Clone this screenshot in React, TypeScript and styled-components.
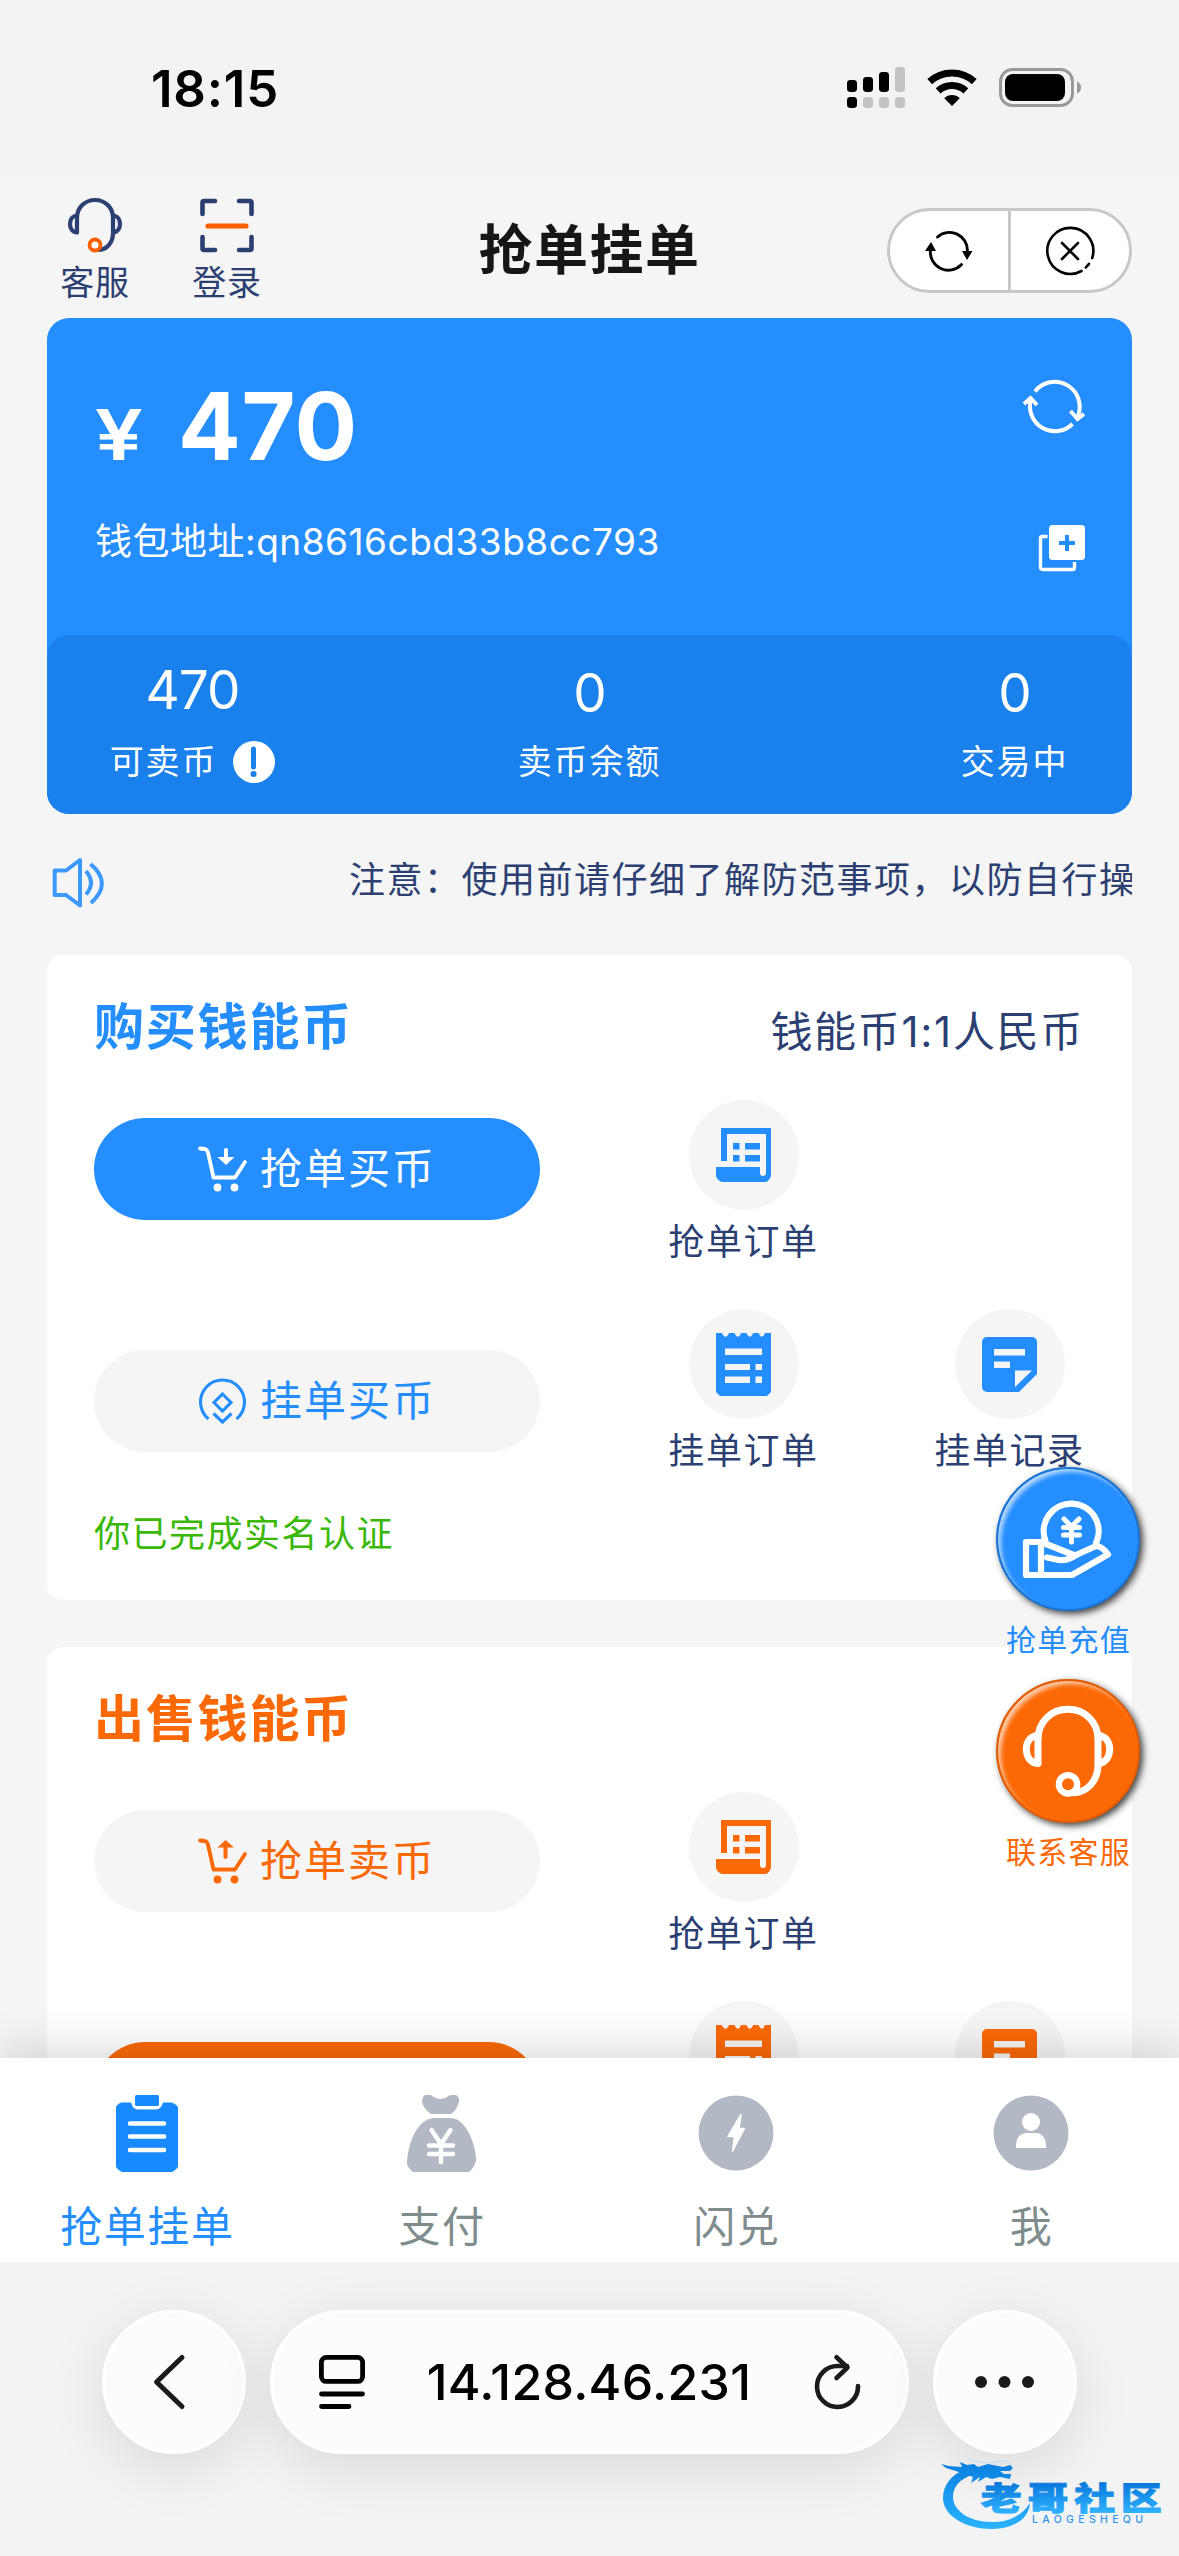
import React from "react";
import styled, { createGlobalStyle } from "styled-components";

const BLUE = "#258eff";
const ORANGE = "#fb6907";
const NAVY = "#2c3f72";
const MIST = "#f5f5f5";

const GlobalStyle = createGlobalStyle`
  * { box-sizing: border-box; }
  body {
    margin: 0;
    background: ${MIST};
    font-family: Inter, "Noto Sans CJK SC", sans-serif;
    color: ${NAVY};
  }
  svg { display: block; flex: none; overflow: visible; }
  button {
    border: 0;
    padding: 0;
    background: none;
    font: inherit;
    color: inherit;
  }
`;

const Screen = styled.div`
  width: 1179px;
  height: 2556px;
  display: flex;
  flex-direction: column;
  overflow: hidden;
  position: relative;
`;

/* ---------- status bar ---------- */

const StatusBar = styled.div`
  flex: none;
  height: 177px;
  padding: 67px 98px 0 151px;
  display: flex;
  justify-content: space-between;
  align-items: flex-start;
  background: #f3f3f3;
`;

const Clock = styled.time`
  padding-top: 1px;
  font-size: 51px;
  line-height: 42px;
  font-weight: 600;
  letter-spacing: 0.8px;
  color: #000;
`;

const StatusIcons = styled.div`
  display: flex;
  align-items: center;
  gap: 22px;
`;

const SignalIcon = () => (
  <svg width="58" height="41" viewBox="0 0 58 41">
    <rect x="0" y="13" width="10" height="12" rx="3.4" />
    <rect x="16" y="10" width="10" height="15" rx="3.4" />
    <rect x="32" y="5" width="10" height="20" rx="3.4" />
    <rect x="48" y="0" width="10" height="25" rx="3.4" fill="#c3c3c3" />
    <rect x="0" y="30" width="10" height="11" rx="3.4" />
    {[16, 32, 48].map((x) => (
      <rect key={x} x={x} y="30" width="10" height="11" rx="3.4" fill="#c3c3c3" />
    ))}
  </svg>
);

const WifiIcon = () => (
  <svg width="50" height="37" viewBox="0 0 50 37" fill="none" stroke="#000" strokeWidth="7">
    <path d="M2.700 12.700A33 33 0 0 1 47.300 12.700" />
    <path d="M11.100 21.900A20.500 20.500 0 0 1 38.900 21.900" />
    <path d="M25 37L17.300 29.200A11 11 0 0 1 32.700 29.200Z" fill="#000" stroke="none" />
  </svg>
);

const BatteryIcon = () => (
  <svg width="82" height="39" viewBox="0 0 82 39">
    <rect x="1.500" y="1.500" width="72" height="36" rx="12" fill="none" stroke="#999" strokeWidth="3" />
    <rect x="6" y="6" width="60" height="27" rx="8" />
    <path d="M78 13.500Q82 15 82 19.500T78 25.500Z" fill="#999" />
  </svg>
);

/* ---------- scrolling page ---------- */

const Page = styled.main`
  flex: none;
  height: 1881px;
  overflow: hidden;
  background: ${MIST};
`;

const Header = styled.header`
  height: 141px;
  padding: 0 47px;
  display: grid;
  grid-template-columns: 1fr auto 1fr;
`;

const HeaderLinks = styled.div`
  display: flex;
  gap: 36px;
  padding-top: 21px;
`;

const HeaderLink = styled.button`
  width: 96px;
  height: 110px;
  display: flex;
  flex-direction: column;
  align-items: center;
  gap: 11px;
  font-size: 34px;
  line-height: 40px;
  letter-spacing: 0.8px;
`;

const Title = styled.h1`
  margin: 44px 0 0;
  font-size: 54px;
  line-height: 60px;
  font-weight: 700;
  letter-spacing: 1.500px;
  color: #161616;
`;

const Capsule = styled.div`
  justify-self: end;
  margin-top: 31px;
  width: 245px;
  height: 85px;
  display: flex;
  border: 3px solid #c8c8c8;
  border-radius: 43px;
  background: #fff;
`;

const CapsuleButton = styled.button<{ $divided?: boolean }>`
  flex: 1;
  display: flex;
  align-items: center;
  justify-content: center;
  ${(p) => p.$divided && "border-right: 3px solid #c8c8c8; flex: none; width: 121px;"}
`;

type HeadsetProps = { size: number; color: string; mic: string; micFill: string };
const HeadsetIcon = ({ size, color, mic, micFill }: HeadsetProps) => (
  <svg width={size} height={size} viewBox="0 0 54 54" fill="none" stroke={color} strokeWidth="4.200" strokeLinecap="round" strokeLinejoin="round">
    <path d="M9 34V20C9 9.500 17 2 27 2S45 9.500 45 20V35C45 44.500 39 51.500 31 52" />
    <path d="M9 17.500C4 18 2 22 2 26S4 34 9 34.500" />
    <path d="M45 17.500C50 18 52 22 52 26S50 34 45 34.500" />
    <circle cx="27" cy="47" r="5.500" fill={micFill} stroke={mic} strokeWidth="3.800" />
  </svg>
);

const ScanIcon = () => (
  <svg width="54" height="54" viewBox="0 0 54 54" fill="none" stroke={NAVY} strokeWidth="4.600" strokeLinecap="round" strokeLinejoin="round">
    <path d="M2.500 16V4.500Q2.500 3 4 3H15M39 3H50Q51.500 3 51.500 4.500V16M51.500 39V50.500Q51.500 52 50 52H39M15 52H4Q2.500 52 2.500 50.500V39" />
    <path d="M8 28H46" stroke="#fb5f00" strokeWidth="5.200" />
  </svg>
);

const CycleIcon = () => (
  <svg width="48" height="38" viewBox="0 0 48 38" fill="none" stroke="#000" strokeWidth="2.900" strokeLinecap="round">
    <path d="M12.500 5A18 18 0 0 1 42.500 19" />
    <path d="M36.500 32.500A18 18 0 0 1 5.500 18" />
    <path d="M37 19H47.500L42 28Z" fill="#000" stroke="none" />
    <path d="M0 19H11L6 10Z" fill="#000" stroke="none" />
  </svg>
);

const CloseIcon = () => (
  <svg width="48" height="48" viewBox="0 0 48 48" fill="none" stroke="#000" strokeWidth="2.600" strokeLinecap="round">
    <path d="M46.200 31A23 23 0 1 0 35.500 44" />
    <path d="M39.800 40.500L43 36.800" />
    <path d="M16 16L32 32M32 16L16 32" />
  </svg>
);

/* ---------- wallet card ---------- */

const Wallet = styled.section`
  margin: 0 47px;
  height: 496px;
  display: flex;
  flex-direction: column;
  justify-content: space-between;
  border-radius: 22px;
  background: ${BLUE};
  color: #fff;
`;

const WalletTop = styled.div`
  padding: 64px 47px 0 48px;
`;

const WalletRow = styled.div`
  display: flex;
  align-items: flex-start;
  justify-content: space-between;
`;

const Balance = styled.div`
  height: 137px;
  display: flex;
  align-items: baseline;
  font-size: 93px;
  line-height: 88px;
  font-weight: 700;
  letter-spacing: 0.500px;
`;

const Currency = styled.span`
  width: 83px;
  font-size: 70px;
  font-weight: 600;
  letter-spacing: 0;
  transform: scaleX(1.22);
  transform-origin: 1px 50%;
`;

const Address = styled.div`
  font-size: 37px;
  line-height: 46px;
  letter-spacing: 0.500px;
`;

const CopyButton = styled.button`
  padding-top: 6px;
`;

const Stats = styled.div`
  height: 179px;
  padding: 27px 0 0;
  display: grid;
  grid-template-columns: 291px 503px 291px;
  border-radius: 22px;
  background: #1a80ec;
`;

const Stat = styled.div<{ $drop?: boolean; $end?: boolean }>`
  width: ${(p) => (p.$end ? "235px" : "auto")};
  justify-self: ${(p) => (p.$end ? "end" : "stretch")};
  padding-top: ${(p) => (p.$drop ? 4 : 1)}px;
  display: flex;
  flex-direction: column;
  align-items: center;
  gap: ${(p) => (p.$drop ? 20 : 23)}px;
`;

const StatValue = styled.div`
  font-size: 53px;
  line-height: 54px;
  font-weight: 400;
  letter-spacing: -1px;
`;

const StatLabel = styled.div`
  display: flex;
  align-items: center;
  gap: 16px;
  font-size: 34px;
  line-height: 44px;
  letter-spacing: 1.900px;
`;

const RefreshIcon = () => (
  <svg width="62" height="54" viewBox="0 0 62 54" fill="none" stroke="#fff" strokeWidth="4">
    <path d="M12 9.500A25 25 0 0 1 55 34" />
    <path d="M49.500 42A25 25 0 0 1 8 17" />
    <path d="M47.500 29L54.500 37L61 32" />
    <path d="M1 22L7.500 16L14 23" />
  </svg>
);

const CopyIcon = () => (
  <svg width="46" height="46" viewBox="0 0 46 46">
    <rect x="1.500" y="11.500" width="34" height="33" rx="2" fill="none" stroke="#fff" strokeWidth="3.400" />
    <rect x="8.500" y="-1" width="38.500" height="38" rx="3" fill={BLUE} />
    <rect x="10" y="0" width="36" height="35" rx="3.500" fill="#fff" />
    <path d="M28 10V26M20 18H36" stroke={BLUE} strokeWidth="4" />
  </svg>
);

const AlertIcon = () => (
  <svg width="42" height="42" viewBox="0 0 42 42">
    <circle cx="21" cy="21" r="21" fill="#fff" />
    <path d="M20.500 8V26" stroke="#1a80ec" strokeWidth="5" strokeLinecap="round" />
    <circle cx="20.500" cy="33" r="3" fill="#1a80ec" />
  </svg>
);

/* ---------- notice ---------- */

const Notice = styled.div`
  height: 141px;
  margin: 0 47px;
  padding: 44px 0 0 6px;
  display: flex;
  align-items: flex-start;
`;

const NoticeWindow = styled.div`
  flex: 1;
  margin-left: 57px;
  padding-left: 188px;
  overflow: hidden;
  white-space: nowrap;
  font-size: 36px;
  line-height: 44px;
  letter-spacing: 1.500px;
`;

const SpeakerIcon = () => (
  <svg width="51" height="50" viewBox="0 0 51 50" fill="none" stroke="#3c99ff" strokeWidth="4" strokeLinejoin="round">
    <path d="M1.700 12.500H13L27 2V47.500L13 37H1.700Z" />
    <path d="M33 13Q43 25 33 36.500" />
    <path d="M37.500 6Q60 25 38 45" />
  </svg>
);

/* ---------- trade cards ---------- */

const TradeCard = styled.section`
  height: 645px;
  margin: 0 47px 47px;
  padding: 44px 48px 0 47px;
  border-radius: 16px;
  background: #fff;
`;

const TradeHead = styled.div`
  height: 101px;
  display: flex;
  justify-content: space-between;
`;

const TradeTitle = styled.h2<{ $color: string }>`
  margin: 0;
  font-size: 50px;
  line-height: 56px;
  letter-spacing: 1.800px;
  font-weight: 700;
  color: ${(p) => p.$color};
`;

const Rate = styled.div`
  padding-top: 5px;
  font-size: 42px;
  line-height: 56px;
  letter-spacing: 1.700px;
`;

const TradeRow = styled.div`
  height: 209px;
  display: grid;
  grid-template-columns: 446px 407px 125px;
`;

const TradeButton = styled.button<{ $bg: string; $fg: string; $top: number }>`
  width: 446px;
  height: 102px;
  margin-top: ${(p) => p.$top}px;
  padding-left: 1px;
  display: flex;
  align-items: center;
  justify-content: center;
  gap: 14px;
  border-radius: 51px;
  background: ${(p) => p.$bg};
  color: ${(p) => p.$fg};
  font-size: 42px;
  line-height: 60px;
  letter-spacing: 2px;
`;

const Shortcut = styled.button`
  justify-self: center;
  width: 160px;
  height: 170px;
  display: flex;
  flex-direction: column;
  align-items: center;
  gap: 10px;
  font-size: 36px;
  line-height: 44px;
  letter-spacing: 1.600px;
  white-space: nowrap;
`;

const Disc = styled.span<{ $color: string }>`
  width: 110px;
  height: 110px;
  flex: none;
  display: flex;
  align-items: center;
  justify-content: center;
  border-radius: 50%;
  background: ${MIST};
  color: ${(p) => p.$color};
`;

const Verified = styled.p`
  margin: -6px 0 0;
  font-size: 36px;
  line-height: 44px;
  letter-spacing: 1.500px;
  color: #39b807;
`;

const CartIcon = ({ up }: { up?: boolean }) => (
  <svg width="47" height="45" viewBox="0 0 47 45" fill="none" stroke="currentColor" strokeWidth="3.800" strokeLinecap="round" strokeLinejoin="round">
    <path d="M1 1.500L6 2Q8 2.500 9 5.500L14.500 30.500H36L46 15" />
    <circle cx="18.500" cy="40.500" r="3.900" fill="currentColor" stroke="none" />
    <circle cx="35.500" cy="40.500" r="3.900" fill="currentColor" stroke="none" />
    {up ? (
      <>
        <path d="M26.500 8V18" strokeWidth="4" />
        <path d="M26.500 1L35 8.500H18.500Z" fill="currentColor" stroke="none" />
      </>
    ) : (
      <>
        <path d="M27 3V11" strokeWidth="4" />
        <path d="M27 18L35.500 10H18.500Z" fill="currentColor" stroke="none" />
      </>
    )}
  </svg>
);

const ListingIcon = () => (
  <svg width="47" height="46" viewBox="0 0 47 46" fill="none" stroke="currentColor" strokeWidth="3.100">
    <path d="M9.500 41A22 22 0 1 1 37.500 41" />
    <path d="M23.500 16L32 24.500L23.500 33L15 24.500Z" />
    <path d="M14.500 35.500L23.500 44L32.500 35.500" />
  </svg>
);

const ScrollIcon = () => (
  <svg width="55" height="54" viewBox="0 0 55 54" fill="currentColor">
    <path d="M5 0H55V48Q53 53 50 54H6Q1 52 0 48V39H44V45A3 3 0 0 0 50 45V6H11V33H5Z" />
    <path d="M17 15H23.500V21.500H17ZM29 15H44V21.500H29ZM17 27H23.500V33.500H17ZM29 27H44V33.500H29Z" />
  </svg>
);

const TicketIcon = () => (
  <svg width="55" height="63" viewBox="0 0 55 63" fill="currentColor" fillRule="evenodd">
    <path d="M0 0H6Q9.500 7.500 13 0H18.500Q22 7.500 25 0H30.500Q34 7.500 37 0H42.500Q46 7.500 49 0H55V59L51 63H4L0 59ZM9 15.500V22H46V15.500ZM9 31V37H34V31ZM39.500 31V37H46V31ZM9 43.500V50H34V43.500ZM39.500 43.500V50H46V43.500Z" />
  </svg>
);

const NoteIcon = () => (
  <svg width="55" height="55" viewBox="0 0 55 55" fill="currentColor" fillRule="evenodd">
    <path d="M5 0H50A5 5 0 0 1 55 5V37L37 55H5A5 5 0 0 1 0 50V5A5 5 0 0 1 5 0ZM12 12V18.500H43V12ZM12 24.500V31H28V24.500ZM33 33.500V50L50 33.500Z" />
  </svg>
);

/* ---------- floating actions ---------- */

const FloatStack = styled.aside`
  position: absolute;
  top: 1467px;
  left: 987px;
  width: 162px;
  display: flex;
  flex-direction: column;
  gap: 20px;
  z-index: 1;
`;

const FloatAction = styled.button<{ $color: string }>`
  height: 192px;
  display: flex;
  flex-direction: column;
  align-items: center;
  gap: 8px;
  color: ${(p) => p.$color};
  font-size: 30px;
  line-height: 42px;
  letter-spacing: 1.300px;
  text-indent: 1px;
`;

const FloatDisc = styled.span<{ $color: string; $edge: string }>`
  width: 144px;
  height: 144px;
  flex: none;
  display: flex;
  align-items: center;
  justify-content: center;
  border: 2px solid ${(p) => p.$edge};
  border-radius: 50%;
  background: ${(p) => p.$color};
  box-shadow:
    3px 3px 7px rgba(0, 0, 0, 0.75),
    inset 4px 4px 4px -1px rgba(255, 255, 255, 0.65);
`;

const HandCoinIcon = () => (
  <svg width="88" height="78" viewBox="1 0 88 78" fill="none" stroke="#fff" strokeWidth="6.200" strokeLinecap="round" strokeLinejoin="round">
    <path d="M22.500 41A27.500 27.500 0 1 1 73 43" />
    <path d="M3 42H18V75H3Z" />
    <path d="M18 42L52 55.500L73 46Q79 46 85 54.500L49 75H18" />
    <path d="M24 57.500L36 60Q45 61 53 55" />
    <path d="M41 19L48.500 26.500L56 19M48.500 27V42M40.500 27.500H56.500M40.500 35H56.500" strokeWidth="5" />
  </svg>
);

/* ---------- tab bar ---------- */

const TabBar = styled.nav`
  flex: none;
  height: 204px;
  display: grid;
  grid-template-columns: repeat(4, 1fr);
  background: #fff;
  box-shadow: 0 0 50px rgba(0, 0, 0, 0.2);
  clip-path: inset(-80px 0 0 0);
  position: relative;
`;

const Tab = styled.button<{ $active?: boolean }>`
  padding-top: 37px;
  display: flex;
  flex-direction: column;
  align-items: center;
  gap: 27px;
  font-size: 42px;
  line-height: 56px;
  letter-spacing: 1.600px;
  color: ${(p) => (p.$active ? BLUE : "#7f8c8d")};
`;

const TabGlyph = styled.span`
  height: 77px;
  padding-right: 1px;
  display: flex;
  align-items: flex-start;
`;

const ClipboardIcon = () => (
  <svg width="62" height="77" viewBox="0 0 62 77" fill="#178aff">
    <rect x="19" y="0" width="24" height="11" rx="1.500" />
    <path d="M0 12Q3 7 7 7.500H15Q17 14.500 22 14.500H40Q45 14.500 47 7.500H55Q59 8 62 12V72Q59 76 56 77H6Q2 75 0 72Z" />
    <path d="M14 28.500H48M14 41.500H48M14 55H48" stroke="#fff" strokeWidth="4.600" strokeLinecap="round" />
  </svg>
);

const MoneyBagIcon = () => (
  <svg width="69" height="77" viewBox="0 0 69 77" fill="#b3b8c5">
    <path d="M18 0H24Q33 8 43 0H49Q53 2 52 7Q49 16 44 19H24Q16 13 15 7Q15 2 18 0Z" />
    <path d="M26 23H44C60 24 69 51 69 66Q67 73 62 77H6Q1 73 0 69C0 51 9 25 26 23Z" />
    <path d="M24.500 35L34 49L43.500 35M34 49V67M22 50.500H46M22 59H46" fill="none" stroke="#fff" strokeWidth="4.400" strokeLinecap="round" />
  </svg>
);

const BoltIcon = () => (
  <svg width="76" height="76" viewBox="0 0 76 76">
    <circle cx="38" cy="38" r="37.500" fill="#b3b8c5" />
    <path d="M43 19.500L41 33.500H46.500L34.500 56L36.500 41.500H30Z" fill="#fff" stroke="#fff" strokeWidth="1.500" strokeLinejoin="round" />
  </svg>
);

const PersonIcon = () => (
  <svg width="76" height="76" viewBox="0 0 76 76">
    <circle cx="38" cy="38" r="37.500" fill="#b3b8c5" />
    <circle cx="38" cy="27" r="9" fill="#fff" />
    <path d="M23 53V50Q24 38 34 38H42Q52 38 53 50V53Z" fill="#fff" />
  </svg>
);

/* ---------- browser bar ---------- */

const BrowserBar = styled.footer`
  flex: 1;
  padding: 48px 102px 0;
  display: flex;
  gap: 24px;
  background: #f3f3f3;
`;

const RoundKey = styled.button<{ $shift?: number }>`
  width: 144px;
  height: 144px;
  flex: none;
  padding-right: ${(p) => p.$shift ?? 0}px;
  display: flex;
  align-items: center;
  justify-content: center;
  border: 3px solid #fff;
  border-radius: 72px;
  background: #fcfcfc;
  box-shadow: 0 14px 60px rgba(0, 0, 0, 0.1);
`;

const AddressPill = styled.div`
  width: 639px;
  height: 144px;
  flex: none;
  padding: 0 45px 0 46px;
  display: flex;
  align-items: center;
  justify-content: space-between;
  border: 3px solid #fff;
  border-radius: 72px;
  background: #fcfcfc;
  box-shadow: 0 14px 60px rgba(0, 0, 0, 0.1);
  color: #000;
  font-size: 50px;
  line-height: 60px;
  font-weight: 500;
  letter-spacing: 0.300px;
`;

const Url = styled.span`
  margin-left: -2px;
`;

const BackIcon = () => (
  <svg width="31" height="54" viewBox="0 0 31 54" fill="none" stroke="#1b1b1b" strokeWidth="5" strokeLinecap="round" strokeLinejoin="round">
    <path d="M28 2.500L2.500 27L28 51.500" />
  </svg>
);

const ReaderIcon = () => (
  <svg width="46" height="54" viewBox="0 0 46 54" fill="none" stroke="#000" strokeWidth="4.800" strokeLinecap="round">
    <rect x="2.400" y="2.400" width="41.200" height="24" rx="5" />
    <path d="M2.500 39H43.500M2.500 51.500H30" />
  </svg>
);

const ReloadIcon = () => (
  <svg width="46" height="54" viewBox="0 0 46 54" fill="none" stroke="#1b1b1b" strokeWidth="4.600" strokeLinecap="round" strokeLinejoin="round">
    <path d="M43 31A20.500 20.500 0 1 1 22.500 11H32" />
    <path d="M21.500 2.300L32.500 12.500L21.500 23" />
  </svg>
);

const MoreIcon = () => (
  <svg width="59" height="12" viewBox="1 0 59 12" fill="#1b1b1b">
    <circle cx="6" cy="6" r="6" />
    <circle cx="29.500" cy="6" r="6" />
    <circle cx="53" cy="6" r="6" />
  </svg>
);

const Watermark = styled.div`
  position: absolute;
  right: 0;
  bottom: 0;
`;

const WatermarkLogo = () => (
  <svg width="239" height="106" viewBox="0 0 239 106">
    <defs>
      <linearGradient id="ring" x1="0" y1="12" x2="0" y2="80" gradientUnits="userSpaceOnUse">
        <stop offset="0" stopColor="#0a7fe0" />
        <stop offset="1" stopColor="#2bb4ff" />
      </linearGradient>
      <linearGradient id="word" x1="0" y1="33" x2="0" y2="63" gradientUnits="userSpaceOnUse">
        <stop offset="0" stopColor="#0878dc" />
        <stop offset="1" stopColor="#2fb2ff" />
      </linearGradient>
    </defs>
    <path fill="url(#ring)" d="M26 19C11 24 3 36 3 48C3 66 26 79 52 79C73 79 89 69 90 53C82 66 68 72 52 72C28 72 13 60 13 47C13 36 20 29 34 24Z" />
    <path fill="url(#ring)" d="M1 14L9 16L22 17L20 12L27 15L34 14L38 17L48 14L58 16L63 17L70 15L73 18L70 21L60 21L64 24L71 24L70 29L60 27L52 29L46 27L38 32L40 27L31 33L33 27L24 24L16 21L6 18Z" />
    <path d="M28 9Q45 15 57 12T72 16" fill="none" stroke="#b5dcf8" strokeWidth="0.800" />
    <g transform="scale(1.280 1)">
      <text x="31.800 68.400 104.800 141.200" y="60" fontFamily="'Noto Sans CJK SC', sans-serif" fontWeight="900" fontSize="32" fill="url(#word)" stroke="url(#word)" strokeWidth="0.900">
        老哥社区
      </text>
    </g>
    <text x="92" y="73" fontFamily="Inter, sans-serif" fontWeight="500" fontSize="10.500" textLength="111" fill="#2f95ea">
      LAOGESHEQU
    </text>
  </svg>
);

/* ---------- composition ---------- */

type ShortcutLinkProps = { icon: React.ReactNode; label: string; color: string };
const ShortcutLink = ({ icon, label, color }: ShortcutLinkProps) => (
  <Shortcut>
    <Disc $color={color}>{icon}</Disc>
    {label}
  </Shortcut>
);

type TradeProps = {
  title: string;
  color: string;
  rate?: string;
  grab: string;
  list: string;
  filled: "grab" | "list";
  up?: boolean;
  note?: string;
};

const Trade = ({ title, color, rate, grab, list, filled, up, note }: TradeProps) => {
  const tone = (on: boolean) => ({ $bg: on ? color : MIST, $fg: on ? "#fff" : color });
  return (
    <TradeCard>
      <TradeHead>
        <TradeTitle $color={color}>{title}</TradeTitle>
        {rate && <Rate>{rate}</Rate>}
      </TradeHead>
      <TradeRow>
        <TradeButton {...tone(filled === "grab")} $top={18}>
          <CartIcon up={up} />
          {grab}
        </TradeButton>
        <ShortcutLink icon={<ScrollIcon />} label="抢单订单" color={color} />
      </TradeRow>
      <TradeRow>
        <TradeButton {...tone(filled === "list")} $top={41}>
          <ListingIcon />
          {list}
        </TradeButton>
        <ShortcutLink icon={<TicketIcon />} label="挂单订单" color={color} />
        <ShortcutLink icon={<NoteIcon />} label="挂单记录" color={color} />
      </TradeRow>
      {note && <Verified>{note}</Verified>}
    </TradeCard>
  );
};

export default function App() {
  return (
    <Screen>
      <GlobalStyle />
      <StatusBar>
        <Clock>18:15</Clock>
        <StatusIcons>
          <SignalIcon />
          <WifiIcon />
          <BatteryIcon />
        </StatusIcons>
      </StatusBar>

      <Page>
        <Header>
          <HeaderLinks>
            <HeaderLink>
              <HeadsetIcon size={54} color={NAVY} mic="#fb5f00" micFill="#fff" />
              客服
            </HeaderLink>
            <HeaderLink>
              <ScanIcon />
              登录
            </HeaderLink>
          </HeaderLinks>
          <Title>抢单挂单</Title>
          <Capsule>
            <CapsuleButton $divided>
              <CycleIcon />
            </CapsuleButton>
            <CapsuleButton>
              <CloseIcon />
            </CapsuleButton>
          </Capsule>
        </Header>

        <Wallet>
          <WalletTop>
            <WalletRow>
              <Balance>
                <Currency>¥</Currency>
                470
              </Balance>
              <RefreshIcon />
            </WalletRow>
            <WalletRow>
              <Address>钱包地址:qn8616cbd33b8cc793</Address>
              <CopyButton>
                <CopyIcon />
              </CopyButton>
            </WalletRow>
          </WalletTop>
          <Stats>
            <Stat>
              <StatValue>470</StatValue>
              <StatLabel>
                可卖币
                <AlertIcon />
              </StatLabel>
            </Stat>
            <Stat $drop>
              <StatValue>0</StatValue>
              <StatLabel>卖币余额</StatLabel>
            </Stat>
            <Stat $drop $end>
              <StatValue>0</StatValue>
              <StatLabel>交易中</StatLabel>
            </Stat>
          </Stats>
        </Wallet>

        <Notice>
          <SpeakerIcon />
          <NoticeWindow>注意：使用前请仔细了解防范事项，以防自行操</NoticeWindow>
        </Notice>

        <Trade
          title="购买钱能币"
          color={BLUE}
          rate="钱能币1:1人民币"
          grab="抢单买币"
          list="挂单买币"
          filled="grab"
          note="你已完成实名认证"
        />
        <Trade title="出售钱能币" color={ORANGE} grab="抢单卖币" list="挂单卖币" filled="list" up />
      </Page>

      <FloatStack>
        <FloatAction $color={BLUE}>
          <FloatDisc $color={BLUE} $edge="#1b74d4">
            <HandCoinIcon />
          </FloatDisc>
          抢单充值
        </FloatAction>
        <FloatAction $color={ORANGE}>
          <FloatDisc $color={ORANGE} $edge="#e25c04">
            <HeadsetIcon size={90} color="#fff" mic="#fff" micFill={ORANGE} />
          </FloatDisc>
          联系客服
        </FloatAction>
      </FloatStack>

      <TabBar>
        <Tab $active>
          <TabGlyph>
            <ClipboardIcon />
          </TabGlyph>
          抢单挂单
        </Tab>
        <Tab>
          <TabGlyph>
            <MoneyBagIcon />
          </TabGlyph>
          支付
        </Tab>
        <Tab>
          <TabGlyph>
            <BoltIcon />
          </TabGlyph>
          闪兑
        </Tab>
        <Tab>
          <TabGlyph>
            <PersonIcon />
          </TabGlyph>
          我
        </Tab>
      </TabBar>

      <BrowserBar>
        <RoundKey $shift={10}>
          <BackIcon />
        </RoundKey>
        <AddressPill>
          <ReaderIcon />
          <Url>14.128.46.231</Url>
          <ReloadIcon />
        </AddressPill>
        <RoundKey>
          <MoreIcon />
        </RoundKey>
      </BrowserBar>

      <Watermark>
        <WatermarkLogo />
      </Watermark>
    </Screen>
  );
}
